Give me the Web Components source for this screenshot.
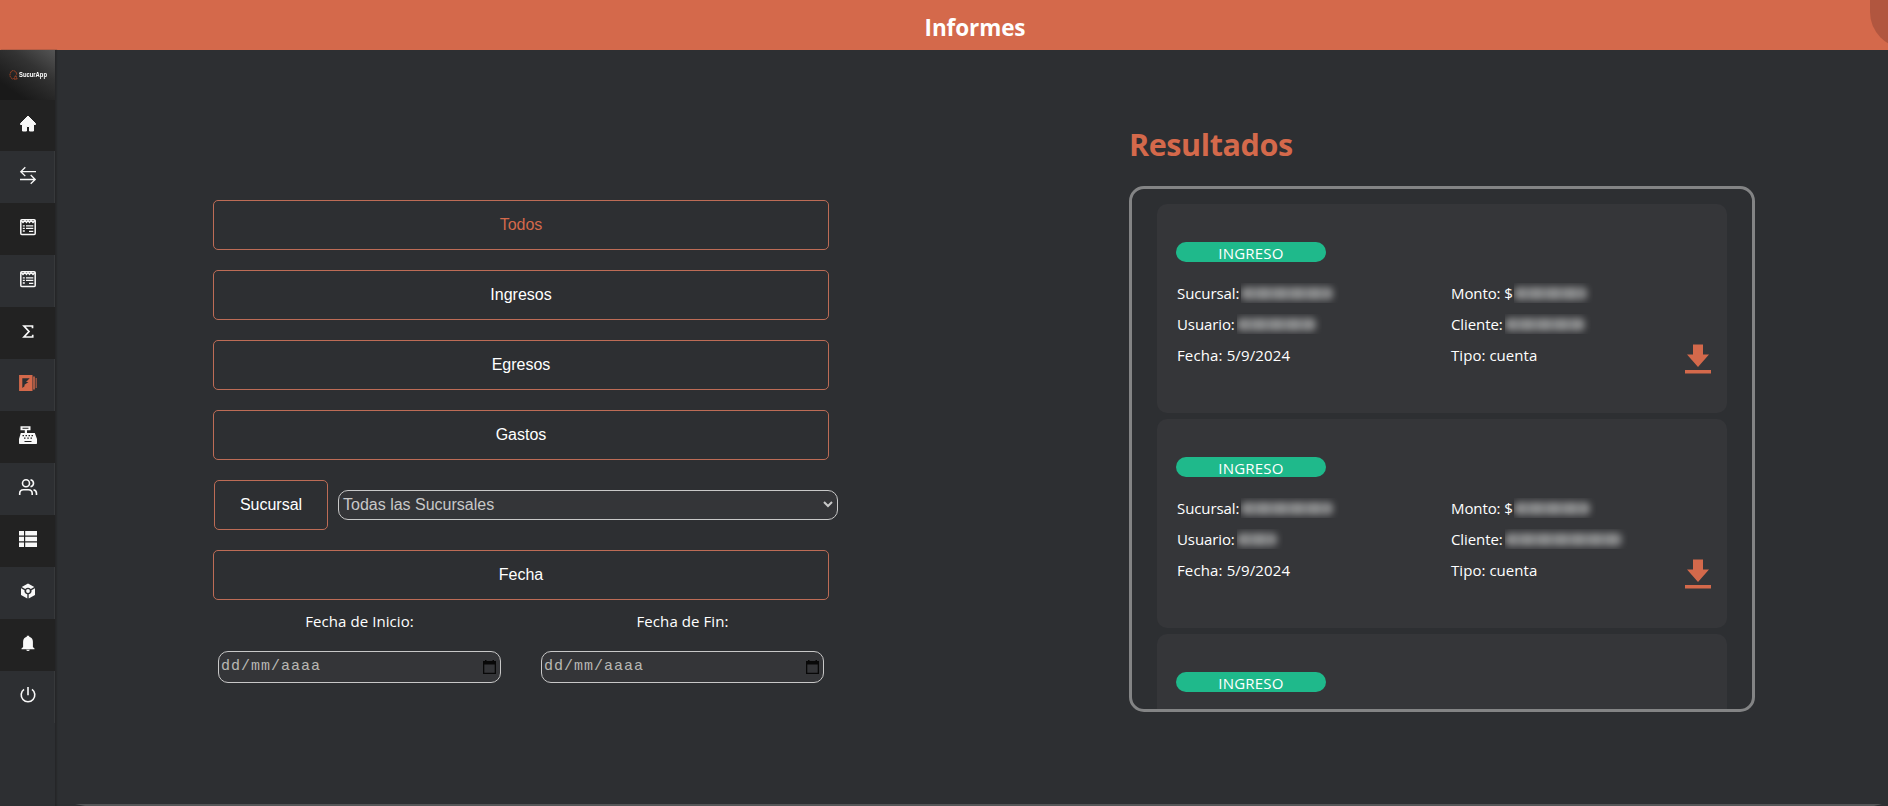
<!DOCTYPE html>
<html lang="es"><head><meta charset="utf-8"><title>Informes</title>
<style>
html,body{margin:0;height:100%;overflow:hidden;background:#2d2f32;color:#fff;font:16px "Open Sans","Noto Sans",sans-serif}
</style></head><body><informes-app></informes-app>
<script>
const define=(name,html,init)=>customElements.define(name,class extends HTMLElement{
  constructor(){super();const t=document.createElement('template');t.innerHTML=html;
    this.attachShadow({mode:'open'}).append(t.content.cloneNode(true));}
  connectedCallback(){if(init&&!this.ready){this.ready=true;init(this,this.shadowRoot)}}
});
const icons={
 home:'<path fill="currentColor" stroke="currentColor" stroke-linejoin="round" d="M8 0 .5 7.500v1h2v6.500h4v-4.500h3V15h4V8.500h2v-1z"/>',
 swap:'<path fill="none" stroke="currentColor" stroke-width="1.300" d="M16 4.700H1M5.300.3.800 4.700l4.500 4.400M0 12.500h15M10.700 8l4.500 4.500-4.500 4.300"/>',
 list:'<rect x=".8" y=".8" width="14.400" height="14.700" rx="1" fill="none" stroke="currentColor" stroke-width="1.500"/><path fill="none" stroke="currentColor" stroke-width="1.300" d="M1 1.500l2 2 2-2 1.500 2L8 1.500l1.500 2 1.500-2 2 2 2-2M2.800 6.800h2M6 6.800h7.300M2.800 9.400h2M6 9.400h7.300M2.800 12h2M9 12.300h4.300"/>',
 sigma:'<path fill="none" stroke="currentColor" stroke-width="1.700" d="M12.500 5.200V3H4l5 5.500L4 14h8.700v-2.300"/>',
 report:'<path fill="currentColor" fill-rule="evenodd" d="M-.9 0h13.400v16h-13.400zM2.300 3.300v9.700l2.200-1.800v-1.400l4-2.800H6l3.700-3.700z"/><path fill="currentColor" fill-opacity=".75" d="M13 1.500h2v13h-2z"/><path fill="currentColor" fill-opacity=".6" d="M15.500 3H17v10h-1.500z"/>',
 cash:'<path fill="currentColor" fill-rule="evenodd" d="M.5-.8h10v4H7V6h7.800L17 12v4.300q0 .7-.7.700H-.3q-.7 0-.7-.7V12L.8 6h4V3.200H.5zM2.500.7v1h6v-1zM2.500 8v1.300H4V8zm3 0v1.300H7V8zm3 0v1.300H10V8zm3 0v1.300H13V8zM4 10.500v1.300h1.500v-1.300zm3.300 0v1.300h1.500v-1.300zm3.200 0v1.300H12v-1.300zM4.500 14v1h7v-1z"/>',
 people:'<g fill="none" stroke="currentColor" stroke-width="1.600"><circle cx="6" cy="4.300" r="3.500"/><path d="M-.3 16v-1.500q0-3.700 3.800-3.700h4.800q3.900 0 3.900 3.700V16M10.500.8q3 .7 3 3.500t-3 3.500M13.500 10.800q3 .7 3 3.700V16"/></g>',
 table:'<path fill="currentColor" d="M-1 0h5v4.500h-5zM5.200 0H17v4.500H5.200zM-1 5.700h5v4.500h-5zM5.200 5.700H17v4.500H5.200zM-1 11.400h5V16h-5zM5.200 11.400H17V16H5.200z"/>',
 cube:'<path fill="currentColor" d="m8 .5 6.300 3.400-3.500 2.100Q8 3.700 5.200 6L1.700 3.900zM1 5.200l3.500 2.100q-.5 3 2.800 4v4.200L1 12zM15 5.200l-3.500 2.100q.5 3-2.800 4v4.200L15 12z"/><circle cx="8" cy="8" r="1.900" fill="currentColor"/>',
 bell:'<path fill="currentColor" d="M6.800 1.800V.8h2.400v1q3.700.9 3.700 5V12l1.600 1.500v.7h-13v-.7L3.100 12V6.800q0-4.100 3.700-5M6.200 14.800h3.600Q9.500 16 8 16t-1.800-1.200"/>',
 power:'<path fill="none" stroke="currentColor" stroke-width="1.600" d="M8 0v8.300M4 2.400a6.800 6.800 0 1 0 8 0"/>'
};
define('app-header',`<style>:host{display:flex;position:relative;height:50px;background:#d4694b;overflow:hidden;justify-content:center;align-items:center}
h1{margin:5px 0 0 62px;font:700 22.500px/30px "Open Sans";letter-spacing:-.1px}
i{position:absolute;left:1870px;top:-60px;width:110px;height:108px;border-radius:36px;background:#b1563f}</style><h1><slot></slot></h1><i></i>`);
define('nav-item',`<style>:host{display:flex;box-sizing:border-box;height:52px;padding:0 0 4px 1px;align-items:center;justify-content:center;border-right:1px solid #37393b;color:#f8f8f8}
:host([dark]){background:#222;border-color:#222}:host([active]){color:#d4694b}svg{overflow:visible;width:16px;height:16px}</style><svg viewBox="0 0 16 16"></svg>`,(h,r)=>{r.querySelector('svg').innerHTML=icons[h.getAttribute('icon')]});
define('brand-logo',`<style>:host{display:flex;height:50px;align-items:center;padding-left:9px;gap:1px;background:linear-gradient(215deg,#555 0,#333 35%,#191919 80%)}
span{font:700 7.500px/10px "Liberation Sans";transform:scaleX(.78);transform-origin:left;width:34px;white-space:nowrap}svg{width:9px;height:12px;flex:none}</style>
<svg viewBox="0 0 10 12" fill="none" stroke="#b94824"><path stroke-dasharray="2 .6" d="M4 10.500Q0 8 1.500 4T6 1.500 8.500 6M5 10.500l2.500-4L9 10.500z"/></svg><span>SucurApp</span>`);
define('side-bar',`<style>:host{display:block;width:56px;border-right:1px solid #252628;box-sizing:border-box;box-shadow:1px 0 1px #28292b}nav-item:first-of-type{height:51px;padding-bottom:4px}</style>
<brand-logo></brand-logo>`+['home','swap','list','list','sigma','report','cash','people','table','cube','bell','power'].map((n,i)=>`<nav-item icon="${n}" ${i%2==0?'dark':''} ${n=='report'?'active':''}></nav-item>`).join(''));
define('filter-button',`<style>:host{display:block}button{width:100%;height:50px;display:block;background:none;border:1px solid #bd6c56;border-radius:5px;color:inherit;font:16px "Liberation Sans",Arial,sans-serif;padding:0 0 1px}:host([active]){color:#d4694b}</style><button><slot></slot></button>`);
define('branch-select',`<style>:host{display:flex;box-sizing:border-box;height:30px;width:500px;border:1px solid #c8c8c8;border-radius:10px;background:#343538;color:#c8c8c8;font:16px "Liberation Sans",Arial,sans-serif;align-items:center;justify-content:space-between;padding:0 4px 1px}svg{width:10px;height:7px}</style><slot></slot><svg viewBox="0 0 10 7"><path fill="none" stroke="currentColor" stroke-width="2" d="m1 1 4 4 4-4"/></svg>`);
define('date-field',`<style>:host{display:flex;flex-direction:column;align-items:center;width:283px}label{font-size:15px;line-height:22px;letter-spacing:.07px;height:41px}
div{display:flex;align-items:center;justify-content:space-between;box-sizing:border-box;width:283px;height:32px;border:1px solid #c8c8c8;border-radius:10px;background:#343538;color:#b8b8b4;font:15px "Liberation Mono","Courier New",monospace;padding:0 4px 1px 2px}span{letter-spacing:.99px}svg{width:13px;height:14px;margin-top:1px}</style><label><slot></slot></label><div><span>dd/mm/aaaa</span><svg viewBox="0 0 13 14"><path fill="#080808" fill-rule="evenodd" d="M2 0h1.500v1h6V0H11v1h2v13H0V1h2zM1.300 4.500v8.200h10.400V4.500z"/></svg></div>`);
define('filter-panel',`<style>:host{display:flex;flex-direction:column;gap:20px;width:625px;margin:150px 0 0 157px}filter-button{width:616px}.b{display:flex;align-items:center;gap:10px;padding-left:1px}.b filter-button{width:114px}.d{display:flex;gap:40px;margin:-10px 0 0 5px}</style>
<filter-button active>Todos</filter-button><filter-button>Ingresos</filter-button><filter-button>Egresos</filter-button><filter-button>Gastos</filter-button>
<div class="b"><filter-button>Sucursal</filter-button><branch-select>Todas las Sucursales</branch-select></div><filter-button>Fecha</filter-button>
<div class="d"><date-field>Fecha de Inicio:</date-field><date-field>Fecha de Fin:</date-field></div>`);
define('redacted-text',`<style>:host{display:block;flex:none;height:20px;overflow:hidden;margin-left:var(--gap,2px)}i{display:block;height:13px;margin:4px 6px 3px 0;border-radius:5px;background:repeating-linear-gradient(90deg,#8c8d8e 0 9px,#7d7e80 12px 17px);filter:blur(3.500px)}</style><i></i>`,(h)=>{h.style.width=h.getAttribute('width')+'px'});
define('data-row',`<style>:host{display:flex;height:31px;line-height:24px;font-size:15px;letter-spacing:var(--ls,-.1px);white-space:nowrap;align-items:center}</style><slot></slot>`);
define('result-card',`<style>:host{display:block;position:relative;box-sizing:border-box;flex:none;width:570px;height:209px;padding:38px 19px;border-radius:10px;background:#353639}
.badge{width:150px;height:20px;border-radius:10px;background:#1fb98b;text-align:center;font-size:15px;line-height:22px;letter-spacing:.2px}
.g{display:grid;grid-template-columns:274px 1fr;padding:15px 0 0 1px}svg{position:absolute;right:16px;top:140px;width:26px;height:30px}</style>
<div class="badge">INGRESO</div><div class="g"><div><slot name="left"></slot></div><div><slot name="right"></slot></div></div><svg viewBox="0 0 26 30"><path fill="#d4694b" d="M8 .500h10v10h6L13 23 2 10.500h6zM0 26h26v3.500H0z"/></svg>`);
const card=(a,b,c,d)=>`<result-card><data-row slot="left">Sucursal: <redacted-text width="${a}"></redacted-text></data-row><data-row slot="left">Usuario: <redacted-text width="${b}"></redacted-text></data-row><data-row slot="left" style="--ls:.13px">Fecha: 5/9/2024</data-row><data-row slot="right">Monto: $<redacted-text style="--gap:1px" width="${c}"></redacted-text></data-row><data-row slot="right">Cliente: <redacted-text width="${d}"></redacted-text></data-row><data-row slot="right" style="--ls:.05px">Tipo: cuenta</data-row></result-card>`;
define('results-panel',`<style>:host{display:block;width:626px;margin:72px 0 0 291px}h2{margin:0;font:700 30.500px/44px "Open Sans";letter-spacing:-.4px;color:#d4694b}
.box{box-sizing:border-box;height:526px;border:3px solid #838485;border-radius:15px;overflow:hidden;margin-top:20px;padding:15px 25px;display:flex;flex-direction:column;gap:6px}</style>
<h2>Resultados</h2><div class="box">${card(98,85,79,86)}${card(98,46,82,123)}<result-card></result-card></div>`);
define('informes-app',`<style>:host{display:flex;flex-direction:column;height:806px}main{display:flex;flex:1;position:relative;align-items:stretch}filter-panel,results-panel{flex:none}i{position:absolute;left:75px;right:6px;bottom:0;height:2px;background:#555658;clip-path:polygon(0 0,100% 0,calc(100% - 8px) 100%,10px 100%)}</style><app-header>Informes</app-header><main><side-bar></side-bar><filter-panel></filter-panel><results-panel></results-panel><i></i></main>`);
</script></body></html>
